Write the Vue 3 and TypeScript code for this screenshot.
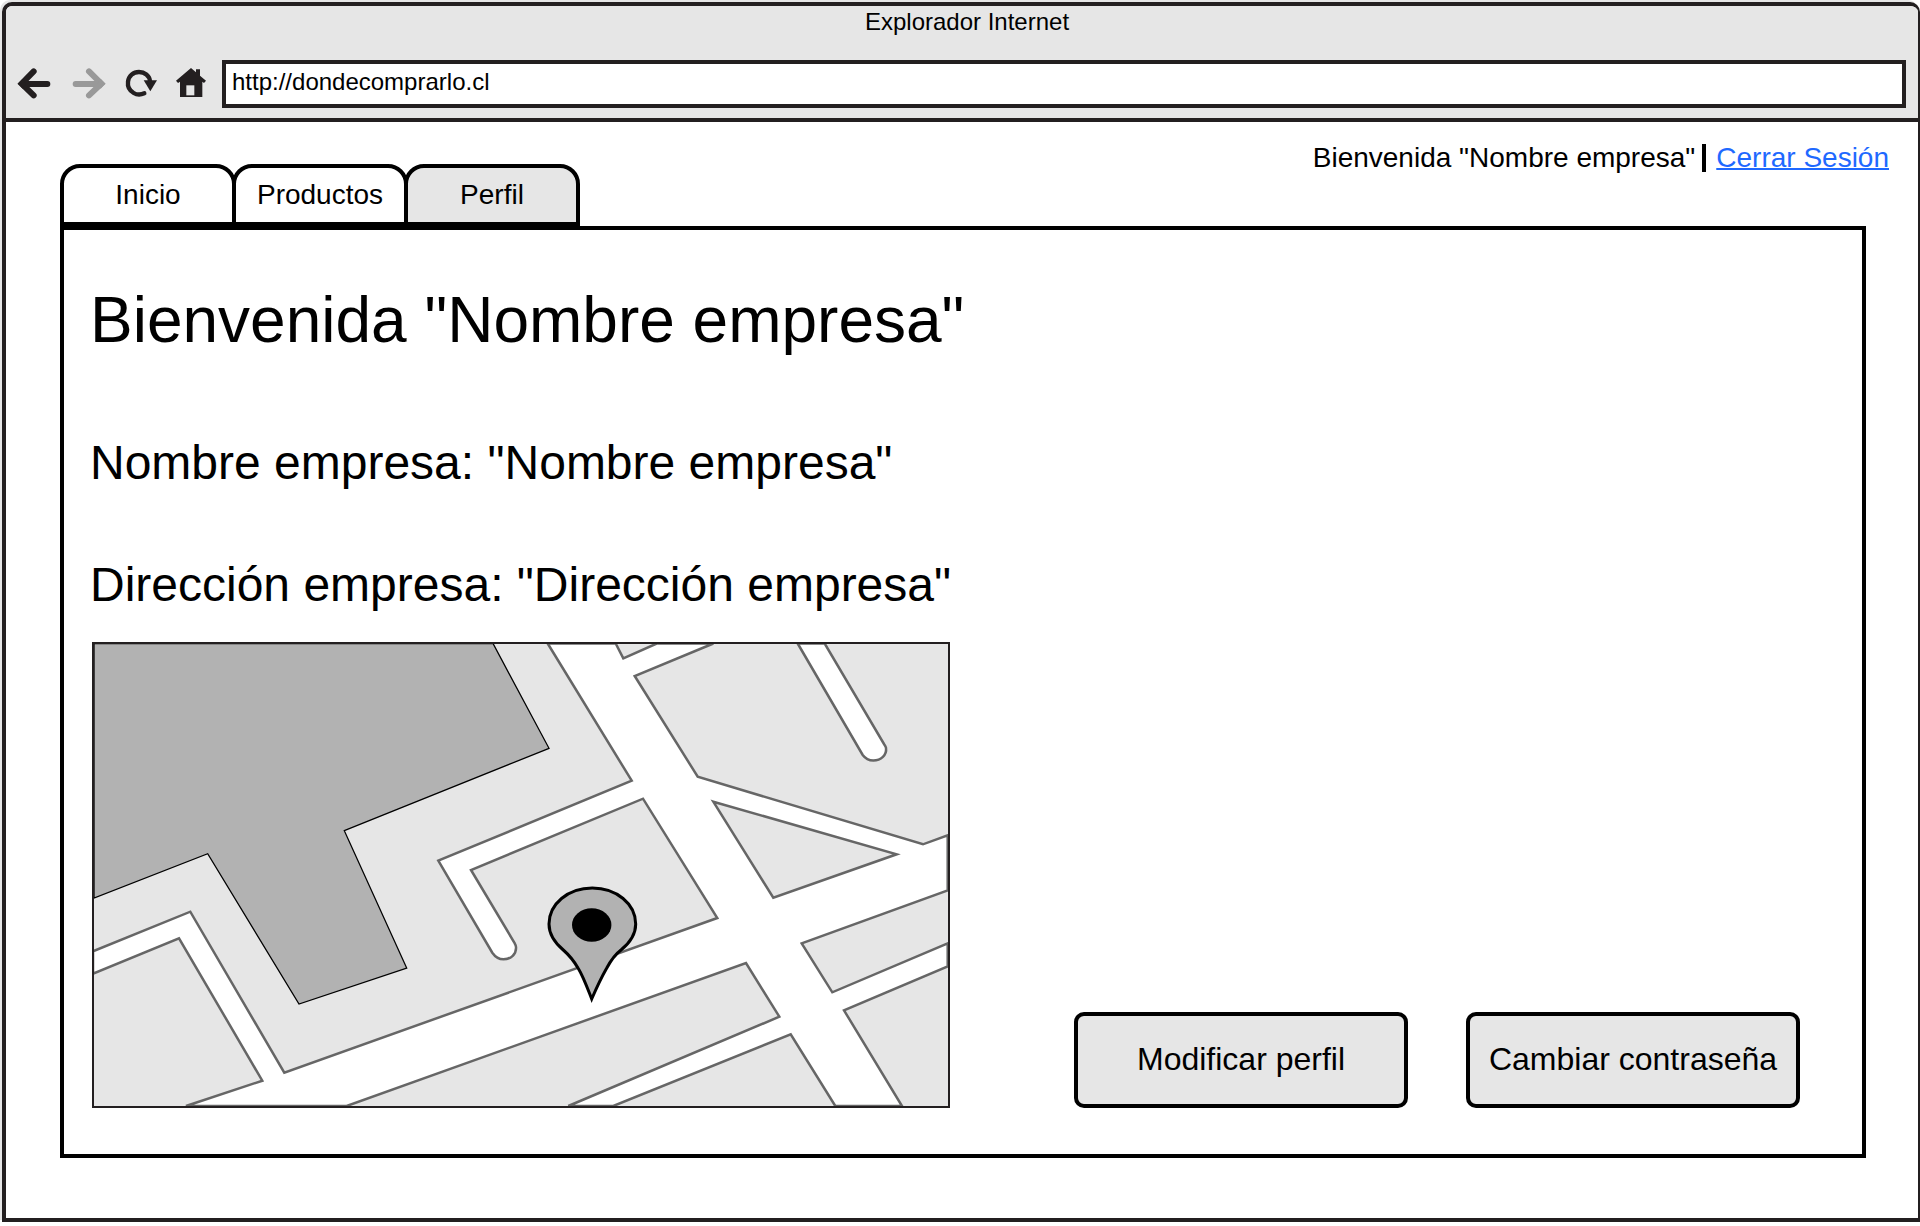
<script setup lang="ts">
import { ref } from 'vue'

interface Tab {
  id: string
  label: string
}

const tabs: Tab[] = [
  { id: 'inicio', label: 'Inicio' },
  { id: 'productos', label: 'Productos' },
  { id: 'perfil', label: 'Perfil' },
]
const activeTab = ref('perfil')
const url = ref('http://dondecomprarlo.cl')
</script>

<template>
  <div class="browser">
    <header class="chrome">
      <div class="chrome-title">Explorador Internet</div>
      <div class="toolbar">
        <button class="nav" type="button" aria-label="Atrás">
          <svg viewBox="42 42 120 120">
            <path d="M101 64 L65 101 L101 136 M68 102 H142" fill="none" stroke="#231f20" stroke-width="18" stroke-linecap="round" />
            <path d="M54 101 L68 86 L78 101 L68 116 Z" fill="#231f20" />
          </svg>
        </button>
        <button class="nav" type="button" aria-label="Adelante" disabled>
          <svg viewBox="198 42 120 120">
            <path d="M267 64 L304 101 L267 136 M302 102 H227" fill="none" stroke="#999" stroke-width="18" stroke-linecap="round" />
            <path d="M316 101 L302 86 L292 101 L302 116 Z" fill="#999" />
          </svg>
        </button>
        <button class="nav" type="button" aria-label="Recargar">
          <svg viewBox="354 42 120 120">
            <path d="M433 130 C424 134 411 135 401 129 C388 121 382 111 384 95 C386 78 400 66 417 66 C434 66 448 77 450 93" fill="none" stroke="#231f20" stroke-width="13" stroke-linecap="round" />
            <path d="M431 91 H471 L451 124 Z" fill="#231f20" />
          </svg>
        </button>
        <button class="nav" type="button" aria-label="Inicio">
          <svg viewBox="510 42 120 120">
            <path d="M573 54 L588 67 V58 H600 V77 L618 92 L612 99 L607 95 V141 H540 V95 L534 99 L528 92 Z" fill="#231f20" />
            <rect x="559" y="106" width="24" height="30" fill="#e6e6e6" />
          </svg>
        </button>
        <input v-model="url" class="address" type="text" aria-label="Dirección web" spellcheck="false" />
      </div>
    </header>

    <main class="page">
      <div class="top">
        <nav class="tabs" role="tablist">
          <button
            v-for="tab in tabs"
            :key="tab.id"
            class="tab"
            :class="{ active: tab.id === activeTab }"
            type="button"
            role="tab"
            :aria-selected="tab.id === activeTab"
            @click="activeTab = tab.id"
          >
            {{ tab.label }}
          </button>
        </nav>
        <div class="session">
          <span>Bienvenida "Nombre empresa"</span>
          <span class="bar"></span>
          <a href="#">Cerrar Sesión</a>
        </div>
      </div>

      <section class="panel">
        <h1>Bienvenida "Nombre empresa"</h1>
        <p class="field">Nombre empresa: "Nombre empresa"</p>
        <p class="field address-field">Dirección empresa: "Dirección empresa"</p>
        <div class="bottom">
          <svg class="map" viewBox="0 0 858 466" role="img" aria-label="Mapa">
            <rect width="858" height="466" fill="#e6e6e6" />
            <path
              d="M2 1.5 H401 L457 106.3 L252.3 188.7 L314.7 326 L207 362 L115.7 211.7 L2 256 Z"
              fill="#b2b2b2" stroke="#000" stroke-width="1.3"
            />
            <g fill="#fff" stroke="#666" stroke-width="2.5" fill-rule="evenodd">
              <path
                d="M455.7 1.5 L539.7 138.7 L346.3 218.7 L400.3 310.7 C404 316 408 317.3 411.5 317.3 C419 317.3 424.5 312 424 305 C424 303.5 423 302 422 300
                   L379 228 L551 156.7 L625.3 276 L192.3 430.7 L98.3 269.7 L1 309.3 V331.7 L87 296.3 L170.3 438.7 L94 464
                   H254.7 L654 321 L687.3 374.7 L476.3 464 H521.3 L698.7 392.3 L743.3 464 H810 L752 368.3 L855.7 324.3
                   V301.3 L740.3 350.3 L709.7 301.3 L855.7 248.3 V193.3 L831 202.3 L605.7 134.7 L542.7 34 L621.3 1.5
                   H564.7 L531.3 16.3 L523.7 1.5 Z
                   M621.3 159.7 L804.7 212.3 L681.3 255.7 Z"
              />
              <path d="M705.7 1.5 L770.7 113 C774 117.5 778 118.5 781.3 118.5 C789 118.5 795 113 794 106 C794 105 793 103.5 792 102 L732.7 1.5 Z" />
            </g>
            <path
              d="M499.7 357 C495 345 491 334 486.3 326.5 C482 319 477 313 471.3 308 C463 301 457 293.5 457 282 C457 262 476 246 500.3 246
                 C524.5 246 543.7 262 543.7 282 C543.7 293.5 537 301.5 529 308 C523 312.5 518.5 319 514.5 326.5 C508.5 337 504 347 499.7 357 Z"
              fill="#b2b2b2" stroke="#000" stroke-width="3"
            />
            <ellipse cx="499.7" cy="283" rx="19.7" ry="16.7" />
            <rect x="1" y="1" width="856" height="464" fill="none" stroke="#231f20" stroke-width="2" />
          </svg>
          <div class="actions">
            <button type="button">Modificar perfil</button>
            <button type="button">Cambiar contraseña</button>
          </div>
        </div>
      </section>
    </main>
  </div>
</template>

<style>
body {
  background: #fff;
}
</style>

<style scoped>
.browser,
.browser * {
  box-sizing: border-box;
}

.browser {
  margin: 2px 0 4px 2px;
  border: 4px solid #231f20;
  border-right-width: 2px;
  border-radius: 10px 10px 0 0;
  box-shadow: -2px -2px 0 #e6e6e6;
  overflow: hidden;
  background: #fff;
  color: #000;
  font-family: "Liberation Sans", Arial, sans-serif;
}

.browser button,
.browser input {
  font-family: inherit;
  color: inherit;
}

.chrome {
  height: 116px;
  border-bottom: 4px solid #231f20;
  background: #e6e6e6;
}

.chrome-title {
  height: 54px;
  padding: 2px 0 0 10px;
  font-size: 24px;
  line-height: 28px;
  text-align: center;
}

.toolbar {
  display: flex;
  align-items: center;
  gap: 12px;
  padding: 0 12px 0 8px;
}

.nav {
  flex: none;
  width: 40px;
  height: 40px;
  padding: 0;
  border: 0;
  background: none;
}

.nav svg {
  display: block;
  width: 100%;
  height: 100%;
}

.address {
  flex: 1;
  min-width: 0;
  height: 48px;
  padding: 0 6px 4px;
  border: 4px solid #231f20;
  border-radius: 0;
  outline: 0;
  background: #fff;
  font-size: 24px;
}

.page {
  padding: 20px 52px 60px 54px;
}

.top {
  display: flex;
  justify-content: space-between;
  align-items: flex-start;
}

.tabs {
  display: flex;
  margin-top: 22px;
}

.tab {
  width: 176px;
  height: 62px;
  padding: 0;
  border: 4px solid #000;
  border-radius: 20px 20px 0 0;
  background: #fff;
  font-size: 28px;
  line-height: 32px;
}

.tab + .tab {
  margin-left: -4px;
}

.tab.active {
  background: #e6e6e6;
}

.session {
  display: flex;
  align-items: center;
  margin-right: -23px;
  font-size: 28px;
  line-height: 32px;
}

.bar {
  width: 4px;
  height: 28px;
  margin: 0 10px 0 7px;
  background: #000;
}

.session a {
  color: #1f69ff;
  text-decoration-thickness: 2px;
}

.panel {
  padding: 54px 62px 46px 26px;
  border: 4px solid #000;
}

h1,
.field {
  margin: 0;
  font-weight: 400;
}

h1 {
  font-size: 64px;
  line-height: 72px;
}

.field {
  margin-top: 79px;
  font-size: 48px;
  line-height: 56px;
}

.address-field {
  margin-top: 66px;
}

.bottom {
  display: flex;
  justify-content: space-between;
  align-items: flex-end;
  margin: 29px 0 0 2px;
}

.map {
  display: block;
  flex: none;
  width: 858px;
  height: 466px;
}

.actions {
  display: flex;
  gap: 58px;
}

.actions button {
  width: 334px;
  height: 96px;
  padding: 0 0 2px;
  border: 4px solid #000;
  border-radius: 10px;
  background: #e6e6e6;
  font-size: 32px;
}
</style>
